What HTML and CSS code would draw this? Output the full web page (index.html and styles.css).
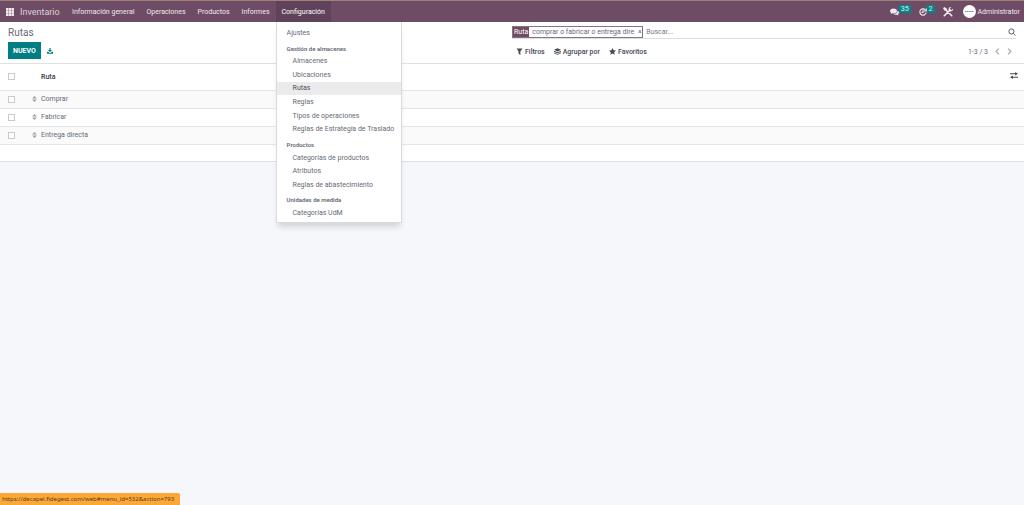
FILE: index.html
```html
<!DOCTYPE html>
<html lang="es">
<head>
<meta charset="utf-8">
<title>Inventario - Rutas</title>
<link rel="stylesheet" href="styles.css">
</head>
<body>
<header class="navbar">
  <button class="apps" aria-label="Aplicaciones"><svg viewBox="0 0 16 16"><path d="M0 0h5v5H0zM5.700 0h4.600v5H5.700zM11 0h5v5h-5zM0 5.700h5v4.600H0zM5.700 5.700h4.600v4.600H5.700zM11 5.700h5v4.600h-5zM0 11h5v5H0zM5.700 11h4.600v5H5.700zM11 11h5v5h-5z"/></svg></button>
  <a class="brand" href="#">Inventario</a>
  <nav class="menu">
    <a class="entry" href="#">Información general</a>
    <a class="entry" href="#">Operaciones</a>
    <a class="entry" href="#">Productos</a>
    <a class="entry" href="#">Informes</a>
    <div class="open-menu">
      <button class="entry active" aria-expanded="true">Configuración</button>
      <div class="dropdown">
        <a class="item top" href="#">Ajustes</a>
        <div class="heading">Gestión de almacenes</div>
        <a class="item" href="#">Almacenes</a>
        <a class="item" href="#">Ubicaciones</a>
        <a class="item hover" href="#">Rutas</a>
        <a class="item" href="#">Reglas</a>
        <a class="item" href="#">Tipos de operaciones</a>
        <a class="item" href="#">Reglas de Estrategía de Traslado</a>
        <div class="heading">Productos</div>
        <a class="item" href="#">Categorías de productos</a>
        <a class="item" href="#">Atributos</a>
        <a class="item" href="#">Reglas de abastecimiento</a>
        <div class="heading">Unidades de medida</div>
        <a class="item" href="#">Categorías UdM</a>
      </div>
    </div>
  </nav>
  <div class="systray">
    <button class="tray" aria-label="Conversaciones"><svg class="chat" viewBox="0 0 18 14"><path d="M7 0c4 0 7 2.200 7 5s-3 5-7 5c-.8 0-1.600-.1-2.300-.3C3.600 10.600 2.200 11 1 11c.8-.8 1.200-1.500 1.300-2.200C.8 7.900 0 6.500 0 5c0-2.800 3-5 7-5z"/><path d="M15.200 4.500C17 5.300 18 6.600 18 8c0 1.400-.8 2.600-2 3.400.1.800.6 1.500 1.300 2.200-1.300 0-2.600-.4-3.700-1.200-2.400.5-5.200.1-7-1.200 4.600 0 8.600-2.600 8.600-6.700z"/></svg><span class="badge">35</span></button>
    <button class="tray" aria-label="Actividades"><svg class="clock" viewBox="0 0 16 16"><path d="M12.500 3.500A6.300 6.300 0 1 0 14.300 9M8 4.500V9H5M14.500 1v5h-5" fill="none" stroke="currentColor" stroke-width="2.200"/></svg><span class="badge">2</span></button>
    <button class="tray tools" aria-label="Herramientas"><svg viewBox="0 0 16 16"><path d="M4 4l10 10M11.500 4.500 2 14" fill="none" stroke="currentColor" stroke-width="2.600" stroke-linecap="round"/><path d="M0 2 2 0l4 2.500V6H2.500zM13.500 0 11 2.500l.5 2 2 .5L16 2.500c.5 3-2 5.500-5 4.500L9 5c-.8-3 1.500-5.500 4.500-5z"/></svg></button>
    <button class="tray user"><span class="avatar"><svg viewBox="0 0 14 14"><path d="M2 7h10" stroke="#6c94a5" stroke-width="1.200" stroke-dasharray="1.500 .4"/></svg></span>Administrator</button>
  </div>
</header>
<main>
  <section class="panel">
    <div class="left">
      <h1>Rutas</h1>
      <div class="actions">
        <button class="primary">NUEVO</button>
        <button class="export" aria-label="Exportar"><svg viewBox="0 0 14 14"><path d="M5.500 0h3v4.500H12L7 9.500 2 4.500h3.500zM0 9h3l2 2h4l2-2h3v4.500H0z"/></svg></button>
      </div>
    </div>
    <div class="right">
      <div class="search">
        <div class="facet"><span class="label">Ruta</span><span class="value">comprar <i>o</i> fabricar <i>o</i> entrega dire</span><button aria-label="Quitar">×</button></div>
        <input type="text" placeholder="Buscar..." aria-label="Buscar">
        <button class="find" aria-label="Buscar"><svg viewBox="0 0 14 14"><path d="M9.500 9.500 13 13M10.500 6a4.500 4.500 0 1 1-9 0 4.500 4.500 0 0 1 9 0z" fill="none" stroke="currentColor" stroke-width="1.600"/></svg></button>
      </div>
      <div class="options">
        <button><svg viewBox="0 0 12 12"><path d="M1 1h10L7.500 6v6l-3-2V6z"/></svg>Filtros</button>
        <button><svg viewBox="0 0 14 13"><path d="m7 0 7 3.200-7 3.200-7-3.200z"/><path d="m0 5 7 3.200L14 5v2l-7 3-7-3zM0 8.300l7 3 7-3v1.700l-7 3-7-3z"/></svg>Agrupar por</button>
        <button><svg viewBox="0 0 14 14"><path d="m7 0 2.100 4.600 4.900.6-3.600 3.400.9 5L7 11.200l-4.300 2.400.9-5L0 5.200l4.900-.6z"/></svg>Favoritos</button>
        <div class="pager"><span>1-3 / 3</span><button aria-label="Anterior"><svg viewBox="0 0 8 12"><path d="M6.500 1 1.500 6l5 5"/></svg></button><button aria-label="Siguiente"><svg viewBox="0 0 8 12"><path d="m1.500 1 5 5-5 5"/></svg></button></div>
      </div>
    </div>
  </section>
  <table>
    <thead><tr><th class="check"><input type="checkbox" aria-label="Seleccionar todo"></th><th class="grip"></th><th>Ruta</th><th class="adjust"><button aria-label="Columnas"><svg viewBox="0 0 14 12"><path d="M0 3h10M4 9h10" stroke="currentColor" stroke-width="2"/><path d="m9 0 5 3-5 3zM5 6 0 9l5 3z"/></svg></button></th></tr></thead>
    <tbody>
      <tr><td class="check"><input type="checkbox" aria-label="Comprar"></td><td class="grip"><svg viewBox="0 0 8 10"><path d="m4 0 4 4H0zM4 10 0 6h8z"/></svg></td><td colspan="2">Comprar</td></tr>
      <tr><td class="check"><input type="checkbox" aria-label="Fabricar"></td><td class="grip"><svg viewBox="0 0 8 10"><path d="m4 0 4 4H0zM4 10 0 6h8z"/></svg></td><td colspan="2">Fabricar</td></tr>
      <tr><td class="check"><input type="checkbox" aria-label="Entrega directa"></td><td class="grip"><svg viewBox="0 0 8 10"><path d="m4 0 4 4H0zM4 10 0 6h8z"/></svg></td><td colspan="2">Entrega directa</td></tr>
      <tr class="filler"><td colspan="4"></td></tr>
    </tbody>
  </table>
</main>
<div class="status">https://decapel.fidegest.com/web#menu_id=532&amp;action=793</div>
</body>
</html>
```
FILE: styles.css
```css
* { box-sizing: border-box; }
body {
  min-height: 100vh;
  margin: 0;
  background: #f6f7fb;
  color: #666b75;
  font: 7px/10px Roboto, "Open Sans", sans-serif;
}
button, input { font: inherit; color: inherit; border: 0; padding: 0; margin: 0; background: none; }
a { color: inherit; text-decoration: none; }
svg { display: block; fill: currentColor; }

.navbar {
  display: flex;
  height: 22px;
  border-top: 1px solid #a08078;
  background: #6f4c65;
  color: #f0eaee;
}
.apps { padding: 0 6px; }
.apps svg { width: 8px; height: 8px; }
.brand { display: flex; align-items: center; width: 46px; font-size: 9px; color: #ddd2da; }
.menu { display: flex; }
.entry { display: flex; align-items: center; height: 21px; padding: 0 6px; }
.open-menu { position: relative; }
.active { width: 55px; background: #60435a; color: #fff; }

.dropdown {
  position: absolute;
  z-index: 2;
  top: 21px;
  left: 0;
  display: flex;
  flex-direction: column;
  width: 126px;
  height: 201px;
  padding: 4px 0 2px;
  border: 1px solid #d8dadf;
  border-top: 0;
  background: #fff;
  color: #666b75;
  box-shadow: 0 6px 6px -2px rgba(0, 0, 0, 0.14);
}
.item { display: flex; flex: 1; align-items: center; padding-left: 16px; white-space: nowrap; }
.item.top { padding-left: 10px; }
.item.hover { background: #ebebeb; color: #4a4f59; }
.heading { height: 15px; padding: 4px 0 0 10px; font-size: 6px; font-weight: 600; line-height: 10px; }

.systray { display: flex; gap: 8px; margin-left: auto; padding-right: 4px; }
.tray { display: flex; align-items: center; }
.chat { width: 9px; height: 8px; }
.clock { width: 8px; height: 8px; }
.tools svg { width: 10px; height: 10px; }
.user { gap: 2px; padding-left: 2px; }
.badge { height: 8px; margin-bottom: 5px; padding: 0 2px; background: #00878b; font-size: 7px; line-height: 8px; }
.avatar { width: 13px; height: 13px; border-radius: 50%; background: #fff; }

.panel { display: flex; height: 42px; border-bottom: 1px solid #dfe1e5; background: #fff; }
.left { width: 50%; padding: 5px 8px 0; }
h1 { margin: 0 0 3px; font-size: 10px; font-weight: 400; line-height: 12px; color: #666b74; }
.actions { display: flex; align-items: center; gap: 6px; }
.primary { height: 17px; padding: 0 5px; background: #017e84; color: #fff; font-weight: 700; }
.export { color: #017e84; }
.export svg { width: 6px; height: 6px; }
.right { flex: 1; padding: 3px 8px 0 0; }
.search { display: flex; align-items: center; height: 14px; border-bottom: 1px solid #dcdfe3; }
.facet { display: flex; height: 12px; border: 1px solid #8a7085; line-height: 10px; white-space: nowrap; }
.label { padding: 0 1px; background: #6f4c65; color: #fff; }
.value { padding: 0 3px 0 3px; }
.facet button { width: 5px; line-height: 10px; }
.search input { flex: 1; min-width: 0; padding-left: 3px; outline: 0; }
.search input::placeholder { color: #777c85; }
.find { color: #4a4f59; }
.find svg { width: 8px; height: 8px; }
.options { display: flex; align-items: center; gap: 9px; height: 25px; padding-left: 4px; }
.options > button { display: flex; align-items: center; gap: 2px; color: #444955; font-weight: 500; }
.options > button svg { width: 7px; height: 7px; }
.pager { display: flex; align-items: center; gap: 7px; margin-left: auto; padding-right: 4px; }
.pager svg { width: 5px; height: 7px; fill: none; stroke: #a4a8af; stroke-width: 2; }

table { width: 100%; border-collapse: collapse; background: #fff; table-layout: fixed; }
th, td { height: 18px; padding: 0; border-bottom: 1px solid #e4e6e9; text-align: left; }
th { height: 26px; color: #444955; font-weight: 600; }
tbody tr:nth-child(odd) { background: #fafafa; }
.filler td { height: 17px; border-color: #dcdfe3; }
.check { width: 32px; padding-left: 8px; }
.check input { display: block; appearance: none; width: 7px; height: 7px; border: 1px solid #c8cace; background: #fff; }
.grip { width: 9px; color: #9da2aa; }
.grip svg { width: 5px; height: 6px; }
.adjust { width: 14px; }
.adjust svg { width: 8px; height: 7px; }

.status {
  position: fixed;
  bottom: 0;
  left: 0;
  height: 12px;
  padding: 0 6px 0 2px;
  border-radius: 0 2px 0 0;
  background: #fda836;
  color: #54401f;
  font-family: "Noto Sans", sans-serif;
  font-size: 6px;
  line-height: 12px;
}
```
